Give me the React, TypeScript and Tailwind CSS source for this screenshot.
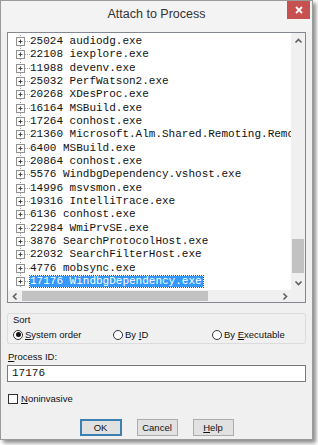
import React from 'react'

const rows = [
  '25024 audiodg.exe',
  '22108 iexplore.exe',
  '11988 devenv.exe',
  '25032 PerfWatson2.exe',
  '20268 XDesProc.exe',
  '16164 MSBuild.exe',
  '17264 conhost.exe',
  '21360 Microsoft.Alm.Shared.Remoting.RemoteContainer.exe',
  '6400 MSBuild.exe',
  '20864 conhost.exe',
  '5576 WindbgDependency.vshost.exe',
  '14996 msvsmon.exe',
  '19316 IntelliTrace.exe',
  '6136 conhost.exe',
  '22984 WmiPrvSE.exe',
  '3876 SearchProtocolHost.exe',
  '22032 SearchFilterHost.exe',
  '4776 mobsync.exe',
  '17176 WindbgDependency.exe',
]

function PlusBox() {
  return (
    <svg width="14" height="13" viewBox="0 0 14 13" className="shrink-0">
      <line x1="4.5" y1="0" x2="4.5" y2="2" stroke="#a0a0a0" strokeDasharray="1 1" />
      <line x1="4.5" y1="11" x2="4.5" y2="13" stroke="#a0a0a0" strokeDasharray="1 1" />
      <rect x="0.5" y="2.5" width="8" height="8" fill="#fff" stroke="#919191" />
      <path d="M2.5 6.5h4M4.5 4.5v4" stroke="#444" />
      <line x1="9" y1="6.5" x2="14" y2="6.5" stroke="#a0a0a0" strokeDasharray="1 1" />
    </svg>
  )
}

function Chevron({ dir }: { dir: 'up' | 'down' | 'left' | 'right' }) {
  const d = {
    up: 'M1.5 5.5 4.5 2.5 7.5 5.5',
    down: 'M1.5 3.5 4.5 6.5 7.5 3.5',
    left: 'M5.5 1.5 2.5 4.5 5.5 7.5',
    right: 'M3.5 1.5 6.5 4.5 3.5 7.5',
  }[dir]
  return (
    <svg width="9" height="9" viewBox="0 0 9 9">
      <path d={d} fill="none" stroke="#606060" strokeWidth="1.6" />
    </svg>
  )
}

function Radio({ checked, children }: { checked?: boolean; children: React.ReactNode }) {
  return (
    <div className="flex items-center gap-[2px]">
      <span className="w-[10px] h-[10px] rounded-full border border-[#333] bg-white flex items-center justify-center">
        {checked && <span className="w-[5px] h-[5px] rounded-full bg-[#111]" />}
      </span>
      <span>{children}</span>
    </div>
  )
}

export default function App() {
  return (
    <div className="w-[318px] h-[445px] bg-white" style={{ fontFamily: '"Liberation Sans", Arial, sans-serif' }}>
      <div className="relative w-[313px] h-[440px] bg-[#f0f0f0] border border-[#9a9a9a] shadow-[3px_3px_4px_rgba(0,0,0,0.45)] flex flex-col">
        {/* Title */}
        <div className="h-[31px] shrink-0 bg-[#f3f3f3] flex items-center justify-center pb-[4px] text-[12.5px] text-[#333]">
          Attach to Process
        </div>
        <div className="absolute top-0 right-[2px] w-[23px] h-[18px] bg-[#c75050] flex items-center justify-center">
          <svg width="8" height="8" viewBox="0 0 8 8">
            <path d="M1 1 7 7M7 1 1 7" stroke="#fff" strokeWidth="1.8" />
          </svg>
        </div>

        <div className="flex-1 flex flex-col px-[6px] text-[9.5px] text-[#111]">
          {/* Process list */}
          <div className="h-[271px] shrink-0 border border-[#828790] bg-white flex flex-col">
            <div className="flex-1 flex min-h-0">
              <div className="flex-1 overflow-hidden pt-[2px] pl-[8px]" style={{ fontFamily: '"Liberation Mono", "Courier New", monospace' }}>
                {rows.map((r, i) => {
                  const sel = i === rows.length - 1
                  return (
                    <div key={r} className="flex items-center h-[13.33px] whitespace-nowrap text-[11px] leading-none">
                      <PlusBox />
                      <span className={sel ? 'bg-[#3399ff] text-white outline outline-1 outline-dotted outline-[#1e5fa0] pr-[1px]' : 'text-[#111]'}>{r}</span>
                    </div>
                  )
                })}
              </div>
              <div className="w-[14px] shrink-0 bg-[#f0f0f0] flex flex-col items-center">
                <div className="h-[17px] flex items-center justify-center"><Chevron dir="up" /></div>
                <div className="flex-1 flex flex-col justify-end">
                  <div className="w-[12px] h-[34px] bg-[#c2c2c2] mb-[2px]" />
                </div>
                <div className="h-[15px] flex items-center justify-center"><Chevron dir="down" /></div>
              </div>
            </div>
            <div className="h-[12px] shrink-0 flex bg-[#f0f0f0]">
              <div className="flex-1 flex items-center">
                <div className="w-[14px] flex items-center justify-center"><Chevron dir="left" /></div>
                <div className="w-[186px] h-[10px] bg-[#c2c2c2]" />
                <div className="flex-1" />
                <div className="w-[14px] flex items-center justify-center"><Chevron dir="right" /></div>
              </div>
              <div className="w-[14px] bg-[#f0f0f0]" />
            </div>
          </div>

          {/* Sort */}
          <div className="mt-[10px] h-[31px] shrink-0 border border-[#dcdcdc] rounded-[2px] px-[5px] flex flex-col">
            <div className="leading-none pt-[1px]">Sort</div>
            <div className="flex items-center mt-[3px]">
              <div className="w-[100px]"><Radio checked><span className="underline">S</span>ystem order</Radio></div>
              <div className="w-[99px]"><Radio>By <span className="underline">I</span>D</Radio></div>
              <Radio>By <span className="underline">E</span>xecutable</Radio>
            </div>
          </div>

          {/* Process ID */}
          <div className="mt-[6px] h-[14px] flex items-center pl-[1px]"><span className="underline">P</span>rocess ID:</div>
          <div className="mt-[1px] h-[17px] border border-[#7a7a7a] bg-white flex items-center pl-[4px] text-[11px] text-[#111]" style={{ fontFamily: '"Liberation Mono", "Courier New", monospace' }}>
            17176
          </div>

          {/* Noninvasive */}
          <div className="mt-[10px] flex items-center gap-[3px] pl-[1px]">
            <span className="w-[10px] h-[10px] border border-[#333] bg-white" />
            <span><span className="underline">N</span>oninvasive</span>
          </div>

          {/* Buttons */}
          <div className="mt-[13px] flex justify-center gap-[15px]">
            <div className="w-[42px] h-[17px] bg-[#e1e1e1] border border-[#3c7fb1] shadow-[inset_0_0_0_1px_#3c7fb1] flex items-center justify-center">OK</div>
            <div className="w-[41px] h-[17px] bg-[#e1e1e1] border border-[#adadad] flex items-center justify-center">Cancel</div>
            <div className="w-[41px] h-[17px] bg-[#e1e1e1] border border-[#adadad] flex items-center justify-center"><span className="underline">H</span>elp</div>
          </div>
        </div>
      </div>
    </div>
  )
}
